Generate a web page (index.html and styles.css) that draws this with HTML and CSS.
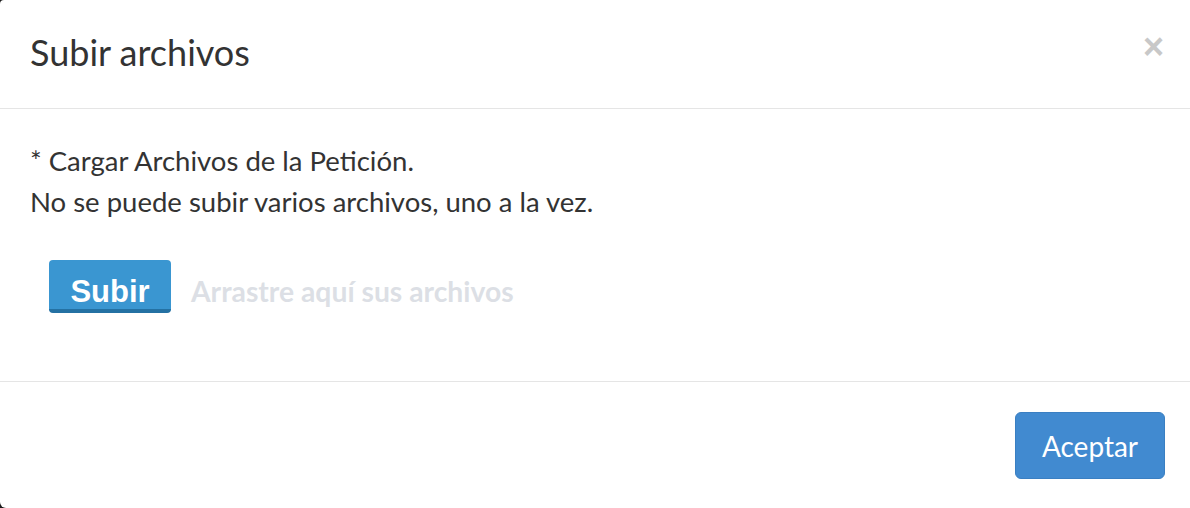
FILE: index.html
```html
<!DOCTYPE html>
<html lang="es">
<head>
<meta charset="utf-8">
<title>Subir archivos</title>
<link rel="stylesheet" href="styles.css">
</head>
<body>
<div class="modal">
  <div class="modal-header">
    <h4 class="modal-title">Subir archivos</h4>
    <button class="close" type="button" aria-label="Cerrar">×</button>
  </div>
  <div class="modal-body">
    <p class="note">* Cargar Archivos de la Petición.<br>No se puede subir varios archivos, uno a la vez.</p>
    <div class="uploader">
      <button class="btn-upload" type="button">Subir</button>
      <span class="drop-hint">Arrastre aquí sus archivos</span>
    </div>
  </div>
  <div class="modal-footer">
    <button class="btn-primary" type="button">Aceptar</button>
  </div>
</div>
</body>
</html>
```

FILE: styles.css
```css
html, body {
  margin: 0;
  padding: 0;
  background: #1a1a1a;
}
body {
  font-family: Lato, "Open Sans", sans-serif;
  color: #333;
}
.modal {
  width: 1190px;
  height: 508px;
  background: #fff;
  border-radius: 4px 0 0 6px;
  display: flex;
  flex-direction: column;
}
.modal-header {
  display: flex;
  justify-content: space-between;
  align-items: flex-start;
  padding: 30px 26px 34px 30px;
  border-bottom: 1px solid #e5e5e5;
}
.modal-title {
  margin: 0;
  font-size: 36px;
  line-height: 44px;
  font-weight: 400;
  color: #333;
}
.close {
  border: 0;
  background: none;
  padding: 0;
  margin-top: -1px;
  font-family: "Liberation Sans", Arial, sans-serif;
  font-weight: 700;
  font-size: 36px;
  line-height: 36px;
  color: #c8c8c8;
  cursor: pointer;
}
.modal-body {
  padding: 31px 30px 68px 30px;
  border-bottom: 1px solid #e5e5e5;
}
.note {
  margin: 0;
  font-size: 27.5px;
  line-height: 41px;
  color: #333;
}
.uploader {
  display: flex;
  align-items: center;
  margin-top: 38px;
  margin-left: 19px;
  gap: 20px;
}
.btn-upload {
  width: 122px;
  height: 53px;
  border: 0;
  border-bottom: 4px solid #2471a3;
  border-radius: 4px;
  background: #3a96d1;
  color: #fff;
  font-family: "Liberation Sans", Arial, sans-serif;
  font-weight: 700;
  font-size: 31px;
  padding: 13px 0 0;
  line-height: 1;
}
.drop-hint {
  font-size: 28.3px;
  font-weight: 700;
  color: #dcdfe5;
  padding-top: 9px;
}
.modal-footer {
  flex: 1;
  display: flex;
  justify-content: flex-end;
  align-items: flex-start;
  padding: 30px 25px 0 0;
}
.btn-primary {
  width: 150px;
  height: 67px;
  border: 1px solid #3a7fc2;
  border-radius: 6px;
  background: #418ad0;
  color: #fff;
  font-family: Lato, sans-serif;
  font-size: 28px;
  padding: 0;
}
```
